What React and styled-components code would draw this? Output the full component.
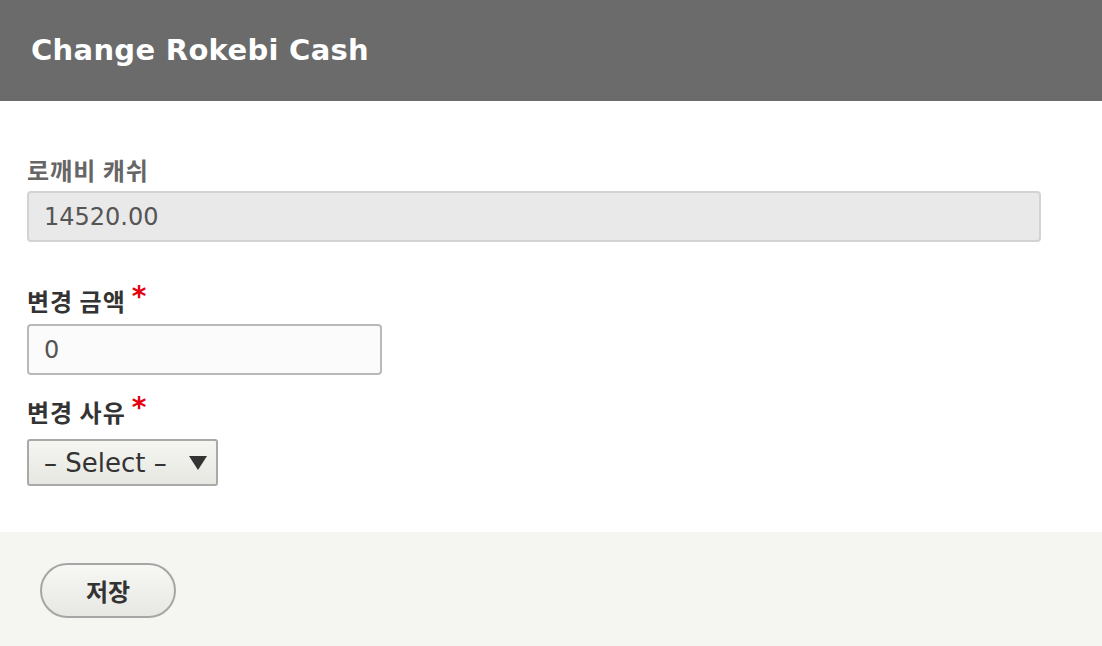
import React from 'react';
import styled, { createGlobalStyle } from 'styled-components';

const GlobalStyle = createGlobalStyle`
    html, body {
        margin: 0;
        padding: 0;
        background: #ffffff;
    }
    body {
        font-family: "DejaVu Sans", "Noto Sans CJK KR", sans-serif;
    }
`

const Dialog = styled.div`
    width: 1102px;
    height: 646px;
    display: flex;
    flex-direction: column;
    background: #ffffff;
`
const TitleBar = styled.div`
    height: 101px;
    background: #6b6b6b;
    display: flex;
    align-items: center;
    padding-left: 31px;
    box-sizing: border-box;
`
const Title = styled.h1`
    margin: 0 0 2px 0;
    color: #ffffff;
    font-size: 29px;
    font-weight: bold;
    letter-spacing: 0.3px;
`
const Body = styled.div`
    flex: 1;
    padding: 54px 0 0 27px;
    box-sizing: border-box;
`
const Field = styled.div`
    display: flex;
    flex-direction: column;
    align-items: flex-start;
    margin-bottom: ${props => props.gap || '22px'};
`
const Label = styled.label`
    font-family: "Noto Sans CJK KR", sans-serif;
    font-size: 24px;
    font-weight: bold;
    line-height: 30px;
    letter-spacing: 1px;
    color: ${props => props.muted ? '#666666' : '#333333'};
    margin-bottom: ${props => props.space || '6px'};
    display: flex;
    align-items: center;
`
const Required = styled.span`
    color: #e5000f;
    margin-left: 6px;
    font-family: "DejaVu Sans", sans-serif;
    font-size: 28px;
    position: relative;
    top: -4px;
`
const TextInput = styled.input`
    width: ${props => props.width};
    height: 51px;
    box-sizing: border-box;
    padding: 0 15px;
    font-family: "DejaVu Sans", sans-serif;
    font-size: 24px;
    color: #555555;
    background: ${props => props.disabled ? '#e9e9e9' : '#fbfbfb'};
    border: 2px solid ${props => props.disabled ? '#d3d3d3' : '#b9b9b9'};
    border-radius: 4px;
    outline: none;
`
const SelectBox = styled.div`
    height: 47px;
    width: 191px;
    box-sizing: border-box;
    display: flex;
    align-items: center;
    justify-content: space-between;
    padding: 0 9px 0 15px;
    border: 2px solid #a9a9a9;
    border-radius: 3px;
    background: linear-gradient(#f5f5f1, #e7e7e2);
    font-family: "DejaVu Sans", sans-serif;
    font-size: 26px;
    color: #333333;
`
const Arrow = styled.span`
    width: 0;
    height: 0;
    border-left: 9px solid transparent;
    border-right: 9px solid transparent;
    border-top: 14px solid #333333;
`
const Footer = styled.div`
    height: 114px;
    background: #f5f5f2;
    display: flex;
    align-items: flex-start;
    padding: 31px 0 0 40px;
    box-sizing: border-box;
`
const Button = styled.button`
    width: 136px;
    height: 55px;
    border-radius: 28px;
    border: 2px solid #a6a6a6;
    background: linear-gradient(#f7f7f4, #e7e7e3);
    font-family: "Noto Sans CJK KR", sans-serif;
    font-size: 24px;
    font-weight: bold;
    color: #333333;
    cursor: pointer;
`

const App = () => (
    <Dialog>
        <GlobalStyle />
        <TitleBar>
            <Title>Change Rokebi Cash</Title>
        </TitleBar>
        <Body>
            <Field gap="44px">
                <Label muted>로깨비 캐쉬</Label>
                <TextInput width="1014px" value="14520.00" disabled readOnly />
            </Field>
            <Field>
                <Label space="8px">변경 금액<Required>*</Required></Label>
                <TextInput width="355px" value="0" readOnly />
            </Field>
            <Field>
                <Label space="12px">변경 사유<Required>*</Required></Label>
                <SelectBox>
                    <span>– Select –</span>
                    <Arrow />
                </SelectBox>
            </Field>
        </Body>
        <Footer>
            <Button>저장</Button>
        </Footer>
    </Dialog>
);

export default App;
